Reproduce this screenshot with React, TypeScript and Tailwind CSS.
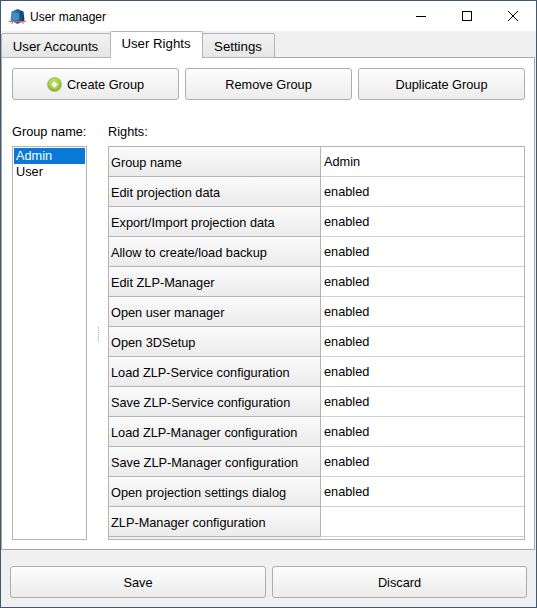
const rows: [string, string][] = [
  ["Group name", "Admin"],
  ["Edit projection data", "enabled"],
  ["Export/Import projection data", "enabled"],
  ["Allow to create/load backup", "enabled"],
  ["Edit ZLP-Manager", "enabled"],
  ["Open user manager", "enabled"],
  ["Open 3DSetup", "enabled"],
  ["Load ZLP-Service configuration", "enabled"],
  ["Save ZLP-Service configuration", "enabled"],
  ["Load ZLP-Manager configuration", "enabled"],
  ["Save ZLP-Manager configuration", "enabled"],
  ["Open projection settings dialog", "enabled"],
  ["ZLP-Manager configuration", ""],
];

function Btn({ className, children }: { className: string; children: React.ReactNode }) {
  return (
    <div className={`flex shrink-0 items-center justify-center rounded-[3px] border border-[#adadad] bg-gradient-to-b from-[#fdfdfd] to-[#ececec] pt-[2px] text-black ${className}`}>
      {children}
    </div>
  );
}

function AppIcon() {
  return (
    <svg width="17" height="17" viewBox="0 0 17 17">
      <defs>
        <linearGradient id="hex" x1="0" x2="1" y1="0" y2="0">
          <stop offset="0%" stopColor="#3f8fc9" />
          <stop offset="55%" stopColor="#1d659f" />
          <stop offset="100%" stopColor="#123a5c" />
        </linearGradient>
      </defs>
      <path d="M8.5 1l6 2.5 1 9-7 3.5-7-3.5 1-9z" fill="url(#hex)" />
      <path d="M4 5h6v7H4z" fill="#4d9ad0" opacity="0.7" />
      <path d="M0 13.5h17M2.5 16l2-3M14.5 16l-2-3" stroke="#ee5a5f" strokeWidth="1" fill="none" />
    </svg>
  );
}

function PlusIcon() {
  return (
    <svg width="15" height="15" viewBox="0 0 15 15" className="-mt-[2px]">
      <defs>
        <radialGradient id="g" cx="45%" cy="25%" r="85%">
          <stop offset="0%" stopColor="#c6e072" />
          <stop offset="100%" stopColor="#7fae24" />
        </radialGradient>
      </defs>
      <circle cx="7.5" cy="7.5" r="7" fill="url(#g)" stroke="#8db23c" strokeWidth="0.6" />
      <circle cx="7.5" cy="7.5" r="4.2" fill="#b5d75c" />
      <path d="M7.5 4.8v5.4M4.8 7.5h5.4" stroke="#fff" strokeWidth="2" />
    </svg>
  );
}

export default function App() {
  return (
    <div className="flex h-[608px] w-[537px] flex-col overflow-hidden border border-[#3f5a70] bg-[#f0f0f0] font-['Liberation_Sans',sans-serif] text-[12.75px] text-black">
      <div className="flex h-[30px] shrink-0 items-center bg-white pl-[8px]">
        <AppIcon />
        <span className="ml-[4px] pt-px text-[12px]">User manager</span>
        <div className="ml-auto flex h-full items-center">
          <div className="flex w-[46px] justify-center"><div className="h-px w-[10px] bg-black" /></div>
          <div className="flex w-[46px] justify-center"><div className="h-[10px] w-[10px] border border-black" /></div>
          <div className="flex w-[46px] justify-center">
            <svg width="10" height="10" viewBox="0 0 10 10"><path d="M0 0l10 10M10 0L0 10" stroke="#000" strokeWidth="1" /></svg>
          </div>
        </div>
      </div>

      <div className="relative z-10 -mb-px flex h-[27px] shrink-0 items-end text-[13.25px]">
        <div className="flex h-[25px] w-[110px] items-center justify-center rounded-t-[2px] border border-[#b4b4b4] bg-gradient-to-b from-[#f2f2f2] to-[#e6e6e6] pr-px pt-[2px]">User Accounts</div>
        <div className="-ml-px flex h-[27px] w-[93px] items-center justify-center rounded-t-[2px] border border-b-0 border-[#b4b4b4] bg-white pb-[2px] pr-px">User Rights</div>
        <div className="-ml-px flex h-[25px] w-[73px] items-center justify-center rounded-t-[2px] border border-[#b4b4b4] bg-gradient-to-b from-[#f2f2f2] to-[#e6e6e6] pr-px pt-[2px]">Settings</div>
      </div>

      <div className="mr-px flex h-[493px] shrink-0 flex-col border border-[#a8a8a8] bg-white pb-[9px] pl-[10px] pr-[9px] pt-[10px]">
        <div className="flex gap-[6px]">
          <Btn className="h-[32px] w-[167px] gap-[5px]"><PlusIcon />Create Group</Btn>
          <Btn className="h-[32px] w-[167px]">Remove Group</Btn>
          <Btn className="h-[32px] w-[167px]">Duplicate Group</Btn>
        </div>

        <div className="mt-[24px] flex min-h-0 flex-1">
          <div className="flex w-[75px] shrink-0 flex-col">
            <div className="h-[22px] whitespace-nowrap leading-[16px]">Group name:</div>
            <div className="flex-1 border border-[#b4b4b4] bg-white p-px leading-[16px]">
              <div className="bg-[#0a78d7] pl-[2px] text-white">Admin</div>
              <div className="pl-[2px]">User</div>
            </div>
          </div>
          <div className="relative w-[21px] shrink-0">
            <div className="absolute left-[11px] top-[203px] h-[14px] border-l border-dotted border-[#b8b8b8]" />
          </div>
          <div className="flex w-[417px] shrink-0 flex-col">
            <div className="h-[22px] leading-[16px]">Rights:</div>
            <div className="flex-1 overflow-hidden border border-[#b4b4b4] bg-white">
              {rows.map(([name, value]) => (
                <div key={name} className="flex h-[30px]">
                  <div className="flex w-[212px] shrink-0 items-center border-b border-r border-[#b4b4b4] bg-gradient-to-b from-[#fafafa] to-[#ececec] pl-[2px] pt-[3px]">{name}</div>
                  <div className="flex-1 border-b border-[#d0d0d0] pl-[3px] pt-[7px] leading-[16px]">{value}</div>
                </div>
              ))}
              <div className="h-[3px] w-[212px] bg-[#f0f0f0]" />
            </div>
          </div>
        </div>
      </div>

      <div className="flex gap-[6px] pl-[9px] pt-[16px]">
        <Btn className="h-[32px] w-[256px]">Save</Btn>
        <Btn className="h-[32px] w-[255px]">Discard</Btn>
      </div>
    </div>
  );
}
